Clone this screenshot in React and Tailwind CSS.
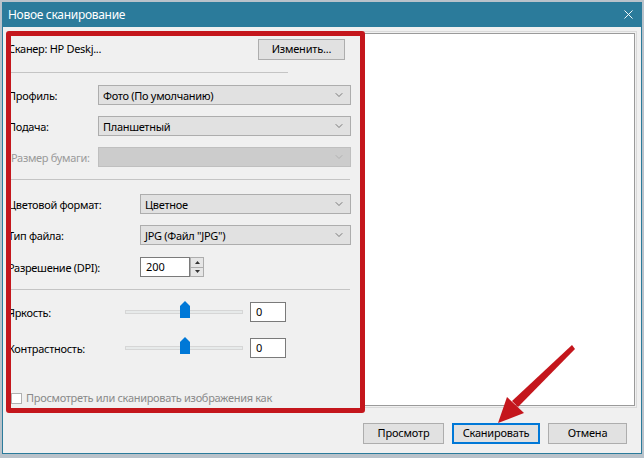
import { X, ChevronDown } from "lucide-react";

const font = { fontFamily: '"Segoe UI", "Noto Sans", sans-serif' };

function Select({ value, width, disabled }) {
  return (
    <div
      className={`flex items-center justify-between h-[20px] border pl-[4px] pr-[5px] ${
        disabled
          ? "bg-[#cccccc] border-[#bfbfbf]"
          : "bg-[#e1e1e1] border-[#adadad]"
      } ${width}`}
    >
      <span className="text-[11px] tracking-[-0.3px] leading-none text-black whitespace-nowrap">
        {value}
      </span>
      <ChevronDown
        size={12}
        strokeWidth={1.5}
        className={disabled ? "text-[#a8a8a8]" : "text-[#555]"}
      />
    </div>
  );
}

function Row({ label, labelW, children, mt, muted }) {
  return (
    <div className={`flex items-center h-[20px] ${mt}`}>
      <div
        className={`${labelW} shrink-0 whitespace-nowrap text-[11px] tracking-[-0.3px] leading-none ${
          muted ? "text-[#9a9a9a]" : "text-black"
        }`}
      >
        {label}
      </div>
      {children}
    </div>
  );
}

function Slider({ pos }) {
  return (
    <div className="relative w-[118px] h-[20px] flex items-center">
      <div className="w-full h-[4px] bg-[#e7eaea] border border-[#d6d6d6]" />
      <svg
        className="absolute top-[-1px]"
        style={{ left: pos }}
        width="10"
        height="17"
        viewBox="0 0 10 17"
      >
        <path d="M0 5 L5 0 L10 5 L10 17 L0 17 Z" fill="#0078d7" />
      </svg>
    </div>
  );
}

function Separator({ w, mt }) {
  return <div className={`h-px shrink-0 bg-[#c4c4c4] ${w} ${mt}`} />;
}

function Button({ children, primary, w }) {
  return (
    <div
      className={`h-[21px] ${w} flex items-center justify-center text-[11px] tracking-[-0.2px] text-black bg-[#e1e1e1] border ${
        primary
          ? "border-[#0078d7] shadow-[inset_0_0_0_1px_#0078d7]"
          : "border-[#adadad]"
      }`}
    >
      {children}
    </div>
  );
}

function NumBox({ value, w }) {
  return (
    <div
      className={`${w} h-[20px] bg-white border border-[#7a7a7a] flex items-center pl-[5px] text-[11px]`}
    >
      {value}
    </div>
  );
}

export default function App() {
  return (
    <div
      className="relative w-[644px] h-[458px] bg-[#b9c2ca] overflow-hidden pt-[2px] pl-[2px]"
      style={font}
    >
      <div className="relative w-[640px] h-[452px] bg-[#f0f0f0] border border-t-0 border-[#2b7b9b]">
        {/* title bar */}
        <div className="h-[25px] bg-[#2b7b9b] flex items-center justify-between pl-[6px] pr-[6px] -mx-px">
          <span className="text-[12px] tracking-[-0.3px] text-white">
            Новое сканирование
          </span>
          <X size={15} strokeWidth={1.5} className="text-white" />
        </div>

        <div className="flex">
          {/* left settings panel */}
          <div className="w-[359px] h-[382px] overflow-hidden pl-[5px] flex flex-col">
            <div className="flex shrink-0 items-center justify-between w-[337px] h-[19px] mt-[13px]">
              <span className="text-[11px] tracking-[-0.3px] text-black">
                Сканер: HP Deskj...
              </span>
              <Button w="w-[87px]">Изменить...</Button>
            </div>
            <Separator w="w-[280px]" mt="mt-[13px]" />

            <Row label="Профиль:" labelW="w-[90px]" mt="mt-[12px]">
              <Select value="Фото (По умолчанию)" width="w-[253px]" />
            </Row>
            <Row label="Подача:" labelW="w-[90px]" mt="mt-[11px]">
              <Select value="Планшетный" width="w-[253px]" />
            </Row>
            <Row
              label={<span className="pl-[3px]">Размер бумаги:</span>}
              labelW="w-[90px]"
              mt="mt-[11px]"
              muted
            >
              <Select value="" width="w-[253px]" disabled />
            </Row>
            <Separator w="w-[342px]" mt="mt-[12px]" />

            <Row label="Цветовой формат:" labelW="w-[132px]" mt="mt-[14px]">
              <Select value="Цветное" width="w-[211px]" />
            </Row>
            <Row label="Тип файла:" labelW="w-[132px]" mt="mt-[11px]">
              <Select value='JPG (Файл "JPG")' width="w-[211px]" />
            </Row>
            <Row label="Разрешение (DPI):" labelW="w-[132px]" mt="mt-[12px]">
              <div className="flex h-[20px]">
                <NumBox value="200" w="w-[50px]" />
                <div className="w-[14px] h-full flex flex-col">
                  <div className="flex-1 bg-[#e6e6e6] border border-[#adadad] flex items-center justify-center">
                    <svg width="5" height="3" viewBox="0 0 5 3">
                      <path d="M0 3 L2.5 0 L5 3 Z" fill="#333" />
                    </svg>
                  </div>
                  <div className="flex-1 bg-[#e6e6e6] border border-t-0 border-[#adadad] flex items-center justify-center">
                    <svg width="5" height="3" viewBox="0 0 5 3">
                      <path d="M0 0 L2.5 3 L5 0 Z" fill="#333" />
                    </svg>
                  </div>
                </div>
              </div>
            </Row>
            <Separator w="w-[342px]" mt="mt-[12px]" />

            <Row label="Яркость:" labelW="w-[117px]" mt="mt-[12px]">
              <Slider pos={55} />
              <div className="ml-[7px]">
                <NumBox value="0" w="w-[36px]" />
              </div>
            </Row>
            <Row label="Контрастность:" labelW="w-[117px]" mt="mt-[16px]">
              <Slider pos={55} />
              <div className="ml-[7px]">
                <NumBox value="0" w="w-[36px]" />
              </div>
            </Row>

            <div className="flex shrink-0 items-start mt-[33px]">
              <div className="w-[11px] h-[11px] mt-[2px] ml-[3px] bg-white border border-[#b0b0b0] shrink-0" />
              <div className="ml-[4px] text-[11px] tracking-[-0.3px] leading-[14px] text-[#8a8a8a] w-[262px]">
                Просмотреть или сканировать изображения как отдельные файлы
              </div>
            </div>
          </div>

          {/* preview pane */}
          <div className="mt-[4px] w-[275px] h-[377px] border border-[#dadada] p-px">
            <div className="w-full h-full bg-white border border-[#9a9a9a]" />
          </div>
        </div>

        {/* bottom buttons */}
        <div className="flex justify-end gap-[8px] pr-[14px] mt-[14px]">
          <Button w="w-[81px]">Просмотр</Button>
          <Button w="w-[88px]" primary>
            Сканировать
          </Button>
          <Button w="w-[79px]">Отмена</Button>
        </div>

        {/* red annotation frame */}
        <div className="absolute left-[3px] top-[29px] w-[359px] h-[382px] border-[5px] border-[#c4161c] rounded-[3px] pointer-events-none" />
      </div>

      {/* red annotation arrow */}
      <svg
        className="absolute left-0 top-0 pointer-events-none"
        width="644"
        height="458"
        viewBox="0 0 644 458"
      >
        <polygon points="572,345 575,349 518,407 512,401" fill="#c4161c" />
        <polygon points="498,423 507,397 524,413" fill="#c4161c" />
      </svg>
    </div>
  );
}
